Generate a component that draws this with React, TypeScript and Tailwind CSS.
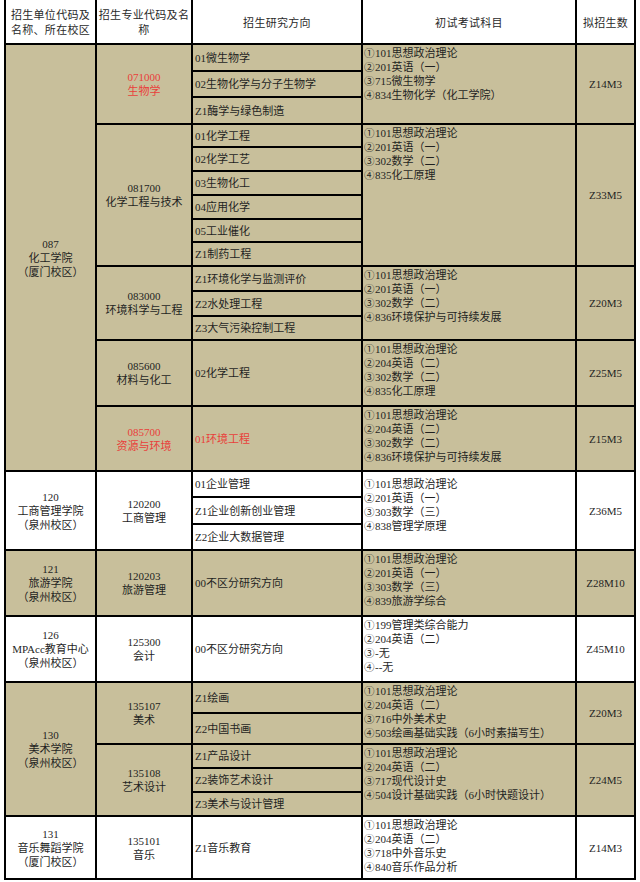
import React from "react";

type Major = {
  code: string;
  name: string;
  red?: boolean;
  redDir?: boolean;
  dirs: string[];
  exams: string[];
  quota: string;
  examPad?: boolean;
};

type Group = {
  unit: string[];
  tan: boolean;
  majors: Major[];
};

const groups: Group[] = [
  {
    unit: ["087", "化工学院", "（厦门校区）"],
    tan: true,
    majors: [
      {
        code: "071000",
        name: "生物学",
        red: true,
        dirs: ["01微生物学", "02生物化学与分子生物学", "Z1酶学与绿色制造"],
        exams: ["①101思想政治理论", "②201英语（一）", "③715微生物学", "④834生物化学（化工学院）"],
        quota: "Z14M3",
      },
      {
        code: "081700",
        name: "化学工程与技术",
        dirs: ["01化学工程", "02化学工艺", "03生物化工", "04应用化学", "05工业催化", "Z1制药工程"],
        exams: ["①101思想政治理论", "②201英语（一）", "③302数学（二）", "④835化工原理"],
        quota: "Z33M5",
      },
      {
        code: "083000",
        name: "环境科学与工程",
        dirs: ["Z1环境化学与监测评价", "Z2水处理工程", "Z3大气污染控制工程"],
        exams: ["①101思想政治理论", "②201英语（一）", "③302数学（二）", "④836环境保护与可持续发展"],
        quota: "Z20M3",
      },
      {
        code: "085600",
        name: "材料与化工",
        dirs: ["02化学工程"],
        exams: ["①101思想政治理论", "②204英语（二）", "③302数学（二）", "④835化工原理"],
        quota: "Z25M5",
      },
      {
        code: "085700",
        name: "资源与环境",
        red: true,
        redDir: true,
        dirs: ["01环境工程"],
        exams: ["①101思想政治理论", "②204英语（二）", "③302数学（二）", "④836环境保护与可持续发展"],
        quota: "Z15M3",
      },
    ],
  },
  {
    unit: ["120", "工商管理学院", "（泉州校区）"],
    tan: false,
    majors: [
      {
        code: "120200",
        name: "工商管理",
        dirs: ["01企业管理", "Z1企业创新创业管理", "Z2企业大数据管理"],
        exams: ["①101思想政治理论", "②201英语（一）", "③303数学（三）", "④838管理学原理"],
        quota: "Z36M5",
        examPad: true,
      },
    ],
  },
  {
    unit: ["121", "旅游学院", "（泉州校区）"],
    tan: true,
    majors: [
      {
        code: "120203",
        name: "旅游管理",
        dirs: ["00不区分研究方向"],
        exams: ["①101思想政治理论", "②201英语（一）", "③303数学（三）", "④839旅游学综合"],
        quota: "Z28M10",
      },
    ],
  },
  {
    unit: ["126", "MPAcc教育中心", "（泉州校区）"],
    tan: false,
    majors: [
      {
        code: "125300",
        name: "会计",
        dirs: ["00不区分研究方向"],
        exams: ["①199管理类综合能力", "②204英语（二）", "③-无", "④--无"],
        quota: "Z45M10",
      },
    ],
  },
  {
    unit: ["130", "美术学院", "（泉州校区）"],
    tan: true,
    majors: [
      {
        code: "135107",
        name: "美术",
        dirs: ["Z1绘画", "Z2中国书画"],
        exams: ["①101思想政治理论", "②204英语（二）", "③716中外美术史", "④503绘画基础实践（6小时素描写生）"],
        quota: "Z20M3",
      },
      {
        code: "135108",
        name: "艺术设计",
        dirs: ["Z1产品设计", "Z2装饰艺术设计", "Z3美术与设计管理"],
        exams: ["①101思想政治理论", "②204英语（二）", "③717现代设计史", "④504设计基础实践（6小时快题设计）"],
        quota: "Z24M5",
      },
    ],
  },
  {
    unit: ["131", "音乐舞蹈学院", "（厦门校区）"],
    tan: false,
    majors: [
      {
        code: "135101",
        name: "音乐",
        dirs: ["Z1音乐教育"],
        exams: ["①101思想政治理论", "②204英语（二）", "③718中外音乐史", "④840音乐作品分析"],
        quota: "Z14M3",
      },
    ],
  },
];

const span: Record<number, string> = {
  1: "row-span-1",
  2: "row-span-2",
  3: "row-span-3",
  5: "row-span-5",
  6: "row-span-6",
  14: "row-span-14",
};

const font = "font-['Liberation_Serif','Noto_Sans_CJK_SC',serif]";

export default function App() {
  return (
    <div className="min-h-screen bg-white pl-[4px]">
      <div
        className={`grid w-[632px] grid-cols-[89px_94px_168px_212px_57px] grid-rows-[43px_25px_24px_25px_21px_22px_22px_22px_21px_22px_23px_23px_22px_64px_63px_24px_25px_24px_64px_64px_29px_29px_22px_22px_22px_61px] gap-[2px] bg-black px-[2px] pb-[2px] text-[11px] leading-[14px] text-[#1f1f1f] ${font}`}
      >
        {/* Header */}
        <div className="col-start-1 flex items-center justify-center bg-white text-center font-['Noto_Sans_CJK_SC',sans-serif] leading-[15px] tracking-[0.3px] text-[#2a2a2a]">
          招生单位代码及
          <br />
          名称、所在校区
        </div>
        <div className="col-start-2 flex items-center justify-center bg-white text-center font-['Noto_Sans_CJK_SC',sans-serif] leading-[15px] tracking-[0.3px] text-[#2a2a2a]">
          招生专业代码及名
          <br />
          称
        </div>
        <div className="col-start-3 flex items-center justify-center bg-white font-['Noto_Sans_CJK_SC',sans-serif] tracking-[0.3px] text-[#2a2a2a]">
          招生研究方向
        </div>
        <div className="col-start-4 flex items-center justify-center bg-white font-['Noto_Sans_CJK_SC',sans-serif] tracking-[0.3px] text-[#2a2a2a]">
          初试考试科目
        </div>
        <div className="col-start-5 flex items-center justify-center bg-white font-['Noto_Sans_CJK_SC',sans-serif] tracking-[0.3px] text-[#2a2a2a]">
          拟招生数
        </div>

        {groups.map((g) => {
          const bg = g.tan ? "bg-[#c8bf9b]" : "bg-white";
          const total = g.majors.reduce((n, m) => n + m.dirs.length, 0);
          return (
            <React.Fragment key={g.unit[0]}>
              {g.majors.map((m, mi) => (
                <React.Fragment key={m.code}>
                  {mi === 0 && (
                    <div className={`col-start-1 ${span[total]} ${bg} flex flex-col items-center justify-center text-center`}>
                      {g.unit.map((u) => (
                        <div key={u}>{u}</div>
                      ))}
                    </div>
                  )}
                  <div
                    className={`col-start-2 ${span[m.dirs.length]} ${bg} flex flex-col items-center justify-center text-center ${m.red ? "text-[#e8403a]" : ""}`}
                  >
                    <div>{m.code}</div>
                    <div>{m.name}</div>
                  </div>
                  {m.dirs.map((d, di) => (
                    <React.Fragment key={d}>
                      <div className={`col-start-3 ${bg} flex items-center pl-[2px] ${m.redDir ? "text-[#e8403a]" : ""}`}>
                        {d}
                      </div>
                      {di === 0 && (
                        <>
                          <div className={`col-start-4 ${span[m.dirs.length]} ${bg} pl-[1px] ${m.examPad ? "pt-[5px]" : "pt-[1px]"}`}>
                            {m.exams.map((e) => (
                              <div key={e} className="flex h-[14px] items-center whitespace-nowrap">
                                <span className="inline-block h-[14px] w-[11px] font-['Noto_Sans_CJK_SC',sans-serif] text-[10.5px] leading-[14px]">
                                  {e.slice(0, 1)}
                                </span>
                                <span>{e.slice(1)}</span>
                              </div>
                            ))}
                          </div>
                          <div className={`col-start-5 ${span[m.dirs.length]} ${bg} flex items-center justify-center`}>
                            {m.quota}
                          </div>
                        </>
                      )}
                    </React.Fragment>
                  ))}
                </React.Fragment>
              ))}
            </React.Fragment>
          );
        })}
      </div>
    </div>
  );
}
